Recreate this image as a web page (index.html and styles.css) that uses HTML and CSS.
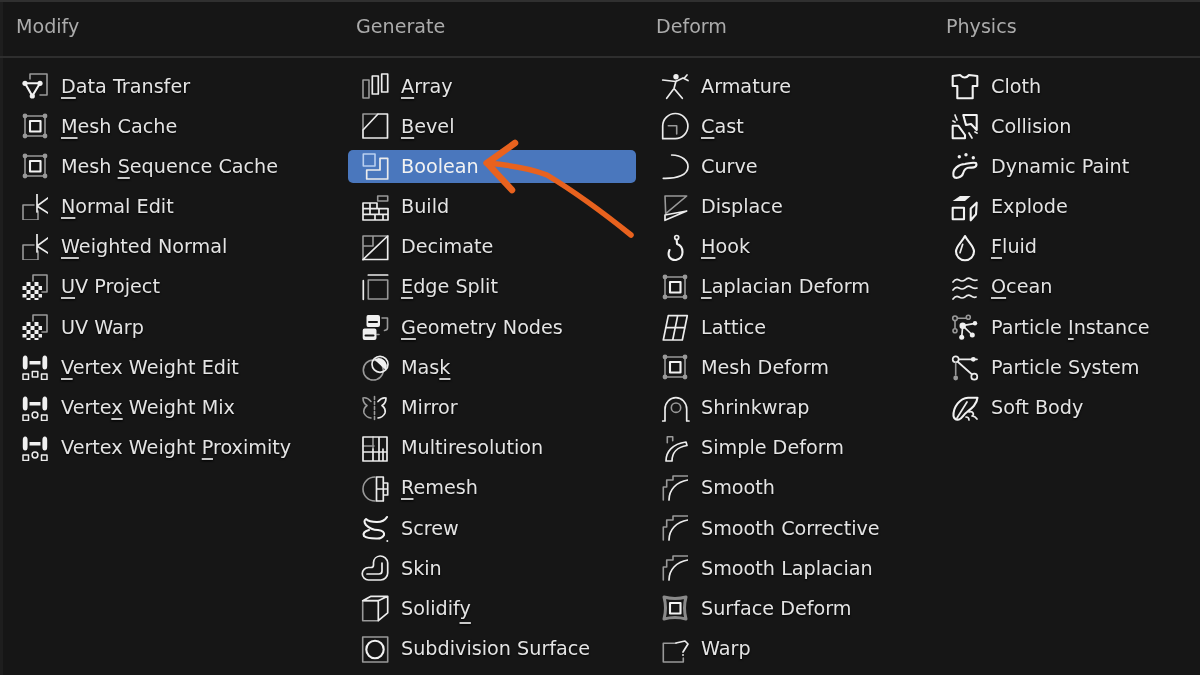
FILE: index.html
```html
<!DOCTYPE html>
<html lang="en">
<head>
<meta charset="utf-8">
<title>Add Modifier</title>
<link rel="stylesheet" href="styles.css">
</head>
<body>
<svg class="defs" aria-hidden="true">
  <symbol id="mesh" viewBox="0 0 26 26"><rect class="d" x="3" y="3" width="20" height="20"/><g class="df"><circle cx="3" cy="3" r="2.4"/><circle cx="23" cy="3" r="2.4"/><circle cx="3" cy="23" r="2.4"/><circle cx="23" cy="23" r="2.4"/></g><rect class="w2" x="8" y="8" width="10.5" height="10.5"/></symbol>
  <symbol id="surface" viewBox="0 0 26 26"><path class="dk" d="M2 2q11 3 22 0q-3 11 0 22q-11-3-22 0q3-11 0-22z"/><rect class="w2" x="8" y="8" width="10.5" height="10.5"/></symbol>
  <symbol id="normal" viewBox="0 0 26 26"><path class="d" d="M12 11H1v15h15V17"/><path class="w" d="M15 0v18M26 4L15 12l11 7"/></symbol>
  <symbol id="uv" viewBox="0 0 26 26"><path class="d" d="M11 7V1h14v17h-5"/><path class="f" d="M4.500 8h4v4h-4zM12.500 8h4v4h-4zM.5 12h4v4h-4zM8.500 12h4v4h-4zM16.500 12h3.500v4h-3.500zM4.500 16h4v4h-4zM12.500 16h4v4h-4zM.5 20h4v3.500h-4zM8.500 20h4v4h-4zM16.500 20h3.500v3.500h-3.500zM4.500 24h4v2h-4zM12.500 24h4v2h-4z"/></symbol>
  <symbol id="smooth" viewBox="0 0 26 26"><path class="d" d="M1.300 25V12h3.400V5H11V1h15"/><path class="w" d="M7 25C7 15 14 7 26 5"/></symbol>
  <symbol id="weight" viewBox="0 0 26 26"><path class="f" d="M.8 5q0-3.500 2.400-3.500T5.600 5v7q0 3.500-2.400 3.500T.8 12zM20.400 5q0-3.500 2.400-3.500T25.200 5v7q0 3.500-2.400 3.500T20.400 12zM7.500 7h11v3.600h-11z"/><rect class="w1" x="1" y="20" width="5.500" height="5.500"/><rect class="w1" x="19.500" y="20" width="5.500" height="5.500"/></symbol>
</svg>

<main class="panel">
  <div class="tab"></div>

  <section class="col">
    <h2>Modify</h2>
    <ul>
      <li><svg class="ico" viewBox="0 0 26 26"><path class="d" d="M8 6V1h17v21h-7"/><path class="w2" d="M3 10.300h15L10.300 23z"/><g class="f"><circle cx="3" cy="10.300" r="2.600"/><circle cx="18" cy="10.300" r="2.600"/><circle cx="10.300" cy="23" r="2.600"/></g></svg><span><u>D</u>ata Transfer</span></li>
      <li><svg class="ico"><use href="#mesh"/></svg><span><u>M</u>esh Cache</span></li>
      <li><svg class="ico"><use href="#mesh"/></svg><span>Mesh <u>S</u>equence Cache</span></li>
      <li><svg class="ico"><use href="#normal"/></svg><span><u>N</u>ormal Edit</span></li>
      <li><svg class="ico"><use href="#normal"/></svg><span><u>W</u>eighted Normal</span></li>
      <li><svg class="ico"><use href="#uv"/></svg><span><u>U</u>V Project</span></li>
      <li><svg class="ico"><use href="#uv"/></svg><span>UV Warp</span></li>
      <li><svg class="ico"><use href="#weight"/><rect class="w1" x="10.300" y="17.500" width="5.500" height="5.500"/></svg><span><u>V</u>ertex Weight Edit</span></li>
      <li><svg class="ico"><use href="#weight"/><circle class="w1" cx="13" cy="20" r="2.900"/></svg><span>Verte<u>x</u> Weight Mix</span></li>
      <li><svg class="ico"><use href="#weight"/><circle class="w1" cx="13" cy="20" r="2.900"/></svg><span>Vertex Weight <u>P</u>roximity</span></li>
    </ul>
  </section>

  <section class="col">
    <h2>Generate</h2>
    <ul>
      <li><svg class="ico" viewBox="0 0 26 26"><rect class="d" x="1" y="7" width="6" height="18"/><rect class="w" x="10.300" y="3" width="6" height="18"/><rect class="w" x="19.700" y="1" width="6" height="18"/></svg><span><u>A</u>rray</span></li>
      <li><svg class="ico" viewBox="0 0 26 26"><path class="d" d="M1 17V1h15"/><path class="w" d="M1 25H25.500V1H16L1 17z"/></svg><span><u>B</u>evel</span></li>
      <li class="on"><svg class="ico" viewBox="0 0 26 26"><rect class="b" x="1.300" y="1" width="11.700" height="12"/><path class="w" d="M18 5.300h7.700V26h-21v-9H18z"/></svg><span>Boolean</span></li>
      <li><svg class="ico" viewBox="0 0 26 26"><rect class="d" x="15.700" y="2" width="10" height="5"/><path class="w" d="M1 14.600V9h14v5.600M1 14.600h25V26H1zM1 20.300h25M8 9v5.600M17 14.600v5.700M8 14.600v5.700M13 20.300V26M21 20.300V26"/></svg><span>Build</span></li>
      <li><svg class="ico" viewBox="0 0 26 26"><path class="d" d="M1 26V2h25M1 12h10V2"/><path class="w" d="M1 25.500h24.700V2L1 25.500"/></svg><span>Decimate</span></li>
      <li><svg class="ico" viewBox="0 0 26 26"><rect class="d" x="6.300" y="6" width="19.400" height="19"/><path class="w" d="M1.300 6.700v18.600M6.300 1h19.400"/></svg><span><u>E</u>dge Split</span></li>
      <li><svg class="ico" viewBox="0 0 26 26"><path class="d" d="M20 4h5.500v10q0 2-3 2.500M17 20.500h-2"/><path class="f" d="M6 1h10q2 0 2 2v8q0 2-2 2H6q-1.500 0-1.500-2V3Q4.500 1 6 1zM2.500 14.500h10q2 0 2 2V24q0 2-2 2h-10Q.7 26 .7 24v-7.500q0-2 1.800-2z"/><path class="k" d="M7 8h8M3.500 21.500h8"/></svg><span><u>G</u>eometry Nodes</span></li>
      <li><svg class="ico" viewBox="0 0 26 26"><circle class="d" cx="11.300" cy="16" r="10"/><circle class="w" cx="18" cy="10.300" r="8"/><path class="f" d="M12.300 5.500a8 8 0 0 1 11.400 10.500z"/></svg><span>Mas<u>k</u></span></li>
      <li><svg class="ico" viewBox="0 0 26 26"><path class="d" d="M12.500 1.500v24" stroke-dasharray="3 2"/><path class="d" d="M9 6.500Q5 2 1 3q0 5 4 7.500-4 3-3 7.500 2 4.500 7 5"/><path class="w" d="M16 6.500q4-4.500 8-3.500 0 5-4 7.500 4 3 3 7.500-2 4.500-7 5"/></svg><span>Mirror</span></li>
      <li><svg class="ico" viewBox="0 0 26 26"><path class="d" d="M11 2v12M1 11h11"/><path class="w" d="M1 2h24v24H1zM17 2v24M21 14v12M1 17h24M11 14v12"/></svg><span>Multiresolution</span></li>
      <li><svg class="ico" viewBox="0 0 26 26"><path class="d" d="M13 2a12 12 0 0 0 0 24"/><path class="w" d="M14.500 2h6.800v24h-6.800zM14.500 14h11.200M21.300 8h4.400v12h-4.400"/></svg><span><u>R</u>emesh</span></li>
      <li><svg class="ico" viewBox="0 0 26 26"><path class="w2" d="M25 2q-3 5-10 5Q7 7 4 4q-3 2 0 6 5 5 12 5 7 1 6 5-2 4-8 3.500-9 0-12-2.500-2-4 5-6"/><circle class="f" cx="25.300" cy="26" r="1"/></svg><span>Screw</span></li>
      <li><svg class="ico" viewBox="0 0 26 26"><path class="w" d="M18 1a7.500 7.500 0 0 1 7.700 7V18a7 7 0 0 1-7 7H6.500a6 6 0 0 1 0-12.500H9q2.500 0 2.500-2.500V7.500A7 7 0 0 1 18 1zM5 19h12q3 0 3-3V8"/></svg><span>Skin</span></li>
      <li><svg class="ico" viewBox="0 0 26 26"><path class="d" d="M.7 5.700V25.700h15.600M.7 5.700h15.600"/><path class="w" d="M.7 5.700L9 1.300h16.700l-9.400 4.400zM25.700 1.300v16.500l-9.400 7.900V5.700"/></svg><span>Solidif<u class="low">y</u></span></li>
      <li><svg class="ico" viewBox="0 0 26 26"><rect class="d" x=".7" y="1" width="25" height="25"/><circle class="w2" cx="13" cy="13.500" r="8.700"/></svg><span>Subdivision Surface</span></li>
    </ul>
  </section>

  <section class="col">
    <h2>Deform</h2>
    <ul>
      <li><svg class="ico" viewBox="0 0 26 26"><circle class="f" cx="14" cy="3.700" r="2.700"/><path class="w" d="M.7 7l13 1.500L21 5M14 8l-2 7.500M12 15.500L4.700 25.300M12 15.500l8.300 9.800M25 2l-3 3.500 4 2"/></svg><span>Armature</span></li>
      <li><svg class="ico" viewBox="0 0 26 26"><path class="w" d="M.7 25.700V13A12.600 12.600 0 1 1 13 25.700z"/><path class="d" d="M6.300 12.700h8.400V21"/></svg><span><u>C</u>ast</span></li>
      <li><svg class="ico" viewBox="0 0 26 26"><path class="w" d="M9.700 2C20 2 26.300 8 26 13.700 26 22 15 25.700 1.300 25.300"/></svg><span>Curve</span></li>
      <li><svg class="ico" viewBox="0 0 26 26"><path class="d" d="M3.700 19.700L3 2h21.700z"/><path class="w" d="M3 21l21.700-4L3 26.300z"/></svg><span>Displace</span></li>
      <li><svg class="ico" viewBox="0 0 26 26"><circle class="w" cx="14.700" cy="3.500" r="2"/><path class="w2" d="M14.700 6l.3 4C22 12 23 24 14 26 8 26.500 5 22 7.500 16"/></svg><span><u>H</u>ook</span></li>
      <li><svg class="ico"><use href="#mesh"/></svg><span><u>L</u>aplacian Deform</span></li>
      <li><svg class="ico" viewBox="0 0 26 26"><path class="w" d="M6.300 1.700h19l-5 24.300h-19zM15.700 1.700L10.700 26M3.700 13.700H23"/></svg><span>Lattice</span></li>
      <li><svg class="ico"><use href="#mesh"/></svg><span>Mesh Deform</span></li>
      <li><svg class="ico" viewBox="0 0 26 26"><path class="w" d="M.7 26H3V14a10.800 11.300 0 0 1 21.700 0V26H27"/><circle class="d" cx="14" cy="12.700" r="4.700"/></svg><span>Shrinkwrap</span></li>
      <li><svg class="ico" viewBox="0 0 26 26"><path class="d" d="M5.300 7.700V1.700h5.400v4"/><path class="w" d="M4 26C4 17 10 9 24 7l1 3.500C15 12 10 18 10 26z"/></svg><span>Simple Deform</span></li>
      <li><svg class="ico"><use href="#smooth"/></svg><span>Smooth</span></li>
      <li><svg class="ico"><use href="#smooth"/></svg><span>Smooth Corrective</span></li>
      <li><svg class="ico"><use href="#smooth"/></svg><span>Smooth Laplacian</span></li>
      <li><svg class="ico"><use href="#surface"/></svg><span>Surface Deform</span></li>
      <li><svg class="ico" viewBox="0 0 26 26"><path class="d" d="M14 7.300H1.300V26h20v-4"/><path class="w" d="M14 7l9-2 3 3-5 8"/><circle class="f" cx="21" cy="19" r=".9"/></svg><span>Warp</span></li>
    </ul>
  </section>

  <section class="col">
    <h2>Physics</h2>
    <ul>
      <li><svg class="ico" viewBox="0 0 26 26"><path class="w2" d="M8 2L.7 3v10h4.600v12.300h15.400V13h4.600V3L17 2q-4 5-9 0z"/></svg><span>Cloth</span></li>
      <li><svg class="ico" viewBox="0 0 26 26"><path class="w2" d="M11.300 2h13.400v15L19 11l-5 1zM.7 12.700h5.600L13 22v3.300H.7z"/><path class="w" d="M3 2l2 5M1 8l2 1M17 20l3 5M23 19l2 1"/></svg><span>Collision</span></li>
      <li><svg class="ico" viewBox="0 0 26 26"><path class="w2" d="M1.500 23C0 16 7 11 13 11c5-1 8-2 11-1 1.500 3-1 5-6 4.500-4 0-6 2-7 6-1 4-8 6-9.500 2.500z"/><g class="f"><circle cx="7.300" cy="3.700" r="1.700"/><circle cx="14" cy="1.800" r="1.700"/><circle cx="21.300" cy="4.700" r="1.700"/></g></svg><span>Dynamic Paint</span></li>
      <li><svg class="ico" viewBox="0 0 26 26"><path class="f" d="M.7 7L8 2h10.700L13 7z"/><rect class="w2" x=".7" y="13.700" width="11.300" height="11.600"/><path class="w2" d="M18.700 14.500l6-5.800-.7 11.600-5.300 6z"/></svg><span>Explode</span></li>
      <li><svg class="ico" viewBox="0 0 26 26"><path class="w2" d="M13 2c3 6 9 10 9 15.500a9 8.800 0 0 1-18 0C4 12 10 8 13 2z"/><path class="w" d="M8 18.700l2.700-8.400"/></svg><span><u>F</u>luid</span></li>
      <li><svg class="ico" viewBox="0 0 26 26"><path class="w" d="M1 8q3-4 6-2t6 0q3-3 6-1t6 1M1 16q3-4 6-2t6 0q3-3 6-1t6 1M1 25q3-4 6-2t6 0q3-3 6-1t5 1"/></svg><span><u>O</u>cean</span></li>
      <li><svg class="ico" viewBox="0 0 26 26"><path class="d" d="M3 7v7M6 4.300h8"/><circle class="d" cx="3" cy="4.300" r="2.300"/><circle class="d" cx="16.300" cy="3.300" r="2"/><circle class="d" cx="3" cy="16.700" r="2"/><path class="w" d="M10.700 11.700L9.700 23M10.700 11.700L23 9.300M10.700 11.700L20.300 21"/><g class="f"><circle cx="10.700" cy="11.700" r="3.200"/><circle cx="23" cy="9.300" r="2.200"/><circle cx="9.700" cy="23.300" r="2.500"/><circle cx="20.300" cy="21" r="2.500"/></g></svg><span>Particle <u>I</u>nstance</span></li>
      <li><svg class="ico" viewBox="0 0 26 26"><circle class="w" cx="3.700" cy="5.300" r="3"/><path class="w" d="M7 5.300h18M6 8l13.500 12"/><circle class="f" cx="21.300" cy="5.300" r="2.400"/><circle class="w" cx="22.300" cy="22.700" r="3"/><path class="d" d="M3.700 9v12"/><circle class="df" cx="3.700" cy="24" r="2.400"/></svg><span>Particle System</span></li>
      <li><svg class="ico" viewBox="0 0 26 26"><path class="w2" d="M1.500 21C1 12 8 3 16 2.700h9.500C25 9 20 13 15 17c-4 3-5 7-8 7.500-3 .5-5-1-5.500-3.500z"/><path class="w" d="M5 23L15 7M17 17q3-1 4 1t-1 3q3 0 5 3M14 22q3 0 3 3"/></svg><span>Soft Body</span></li>
    </ul>
  </section>

  <svg class="arrow" viewBox="0 0 1200 675" aria-hidden="true">
    <path class="a1" d="M486 163C510 165 532 169 547 175 575 192 600 210 631 235"/>
    <path class="a2" d="M515 143L487 163 512 190"/>
  </svg>
</main>
</body>
</html>
```

FILE: styles.css
```css
* { box-sizing: border-box; }
html, body { margin: 0; height: 100%; }
body {
  background: #161616;
  color: #e4e4e4;
  font-family: "DejaVu Sans", sans-serif;
  overflow: hidden;
}
.defs { display: none; }

.panel {
  position: relative;
  width: 1200px;
  height: 675px;
  display: grid;
  grid-template-columns: 340px 300px 290px 270px;
  border-top: 2px solid #303030;
  box-shadow: inset 3px 0 0 #1e1e1e;
  overflow: hidden;
  filter: blur(.4px);
}
.tab {
  position: absolute;
  top: -2px;
  left: 472px;
  width: 26px;
  height: 2px;
  background: #8a8a8a;
}
.col { min-width: 0; }
h2 {
  margin: 0;
  height: 56px;
  padding: 14px 0 0 16px;
  font-size: 19.1px;
  line-height: 22px;
  font-weight: 400;
  color: #ababab;
  border-bottom: 2px solid #2e2e2e;
}
ul {
  list-style: none;
  margin: 0;
  padding: 11.5px 0 0;
}
li {
  display: flex;
  align-items: center;
  gap: 13px;
  width: 288px;
  height: 33px;
  margin: 0 0 7.2px 8px;
  padding-left: 14px;
  border-radius: 5px;
  font-size: 19.2px;
  white-space: nowrap;
  text-shadow: 0 1px 2px #000;
}
li.on { background: #4a77bd; color: #f2f2f2; text-shadow: none; }
u {
  text-decoration-line: underline;
  text-decoration-color: #c9c9c9;
  text-decoration-thickness: 1.5px;
  text-underline-offset: 4px;
  text-decoration-skip-ink: none;
}
u.low { text-underline-offset: 7px; }

.ico {
  flex: none;
  width: 26px;
  height: 26px;
  overflow: visible;
}
.w, .w1, .w2, .d, .b, .k, .dk { fill: none; stroke-linejoin: round; stroke-linecap: round; }
.w { stroke: #ececec; stroke-width: 1.7; }
.w1 { stroke: #ececec; stroke-width: 1.5; }
.w2 { stroke: #f2f2f2; stroke-width: 2.1; }
.d { stroke: #999; stroke-width: 1.6; }
.b { stroke: #b9cff0; stroke-width: 1.6; }
.k { stroke: #161616; stroke-width: 2; }
.f { fill: #f0f0f0; stroke: none; }
.df { fill: #999; stroke: none; }
.dk { fill: #161616; stroke: #8a8a8a; stroke-width: 3; }

.arrow {
  position: absolute;
  top: -2px;
  left: 0;
  width: 1200px;
  height: 675px;
  pointer-events: none;
}
.a1, .a2 { fill: none; stroke: #e8621e; stroke-linecap: round; stroke-linejoin: round; }
.a1 { stroke-width: 5.5; }
.a2 { stroke-width: 6.5; }
```
